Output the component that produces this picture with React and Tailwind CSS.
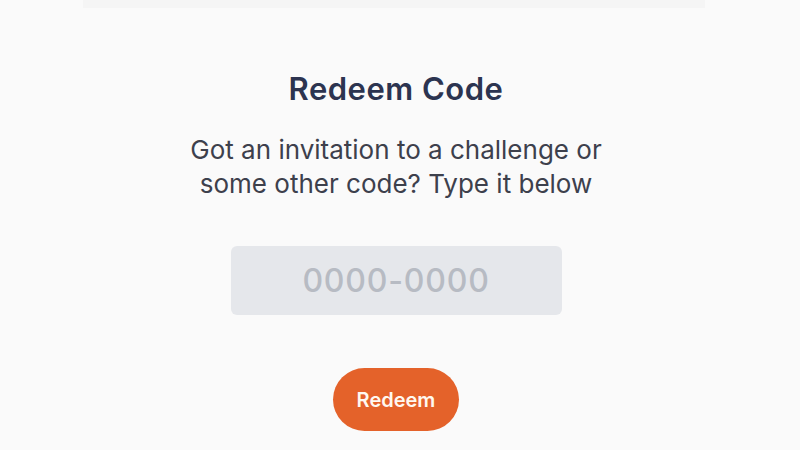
import React, { useState } from 'react';

const App = () => {
    const [code, setCode] = useState('');

    return (
        <div className="w-[800px] h-[450px] bg-[#fafafa] overflow-hidden flex flex-col items-center" style={{ fontFamily: 'Inter, "Noto Sans", sans-serif' }}>
            <div className="w-[622px] h-[8px] bg-[#f5f5f5] shrink-0 mr-[12px]" />

            <div className="flex flex-col items-center pr-[8px]">
                <h1 className="mt-[62px] text-[31px] leading-[38px] font-semibold text-[#2c3450] tracking-[0.5px]">
                    Redeem Code
                </h1>

                <p className="mt-[25px] text-[26px] leading-[34px] text-[#3d404c] text-center">
                    Got an invitation to a challenge or
                    <br />
                    some other code? Type it below
                </p>

                <input
                    type="text"
                    value={code}
                    onChange={(e) => setCode(e.target.value)}
                    placeholder="0000-0000"
                    className="mt-[45px] w-[331px] h-[69px] rounded-[6px] bg-[#e5e7eb] text-center text-[32px] font-medium text-[#3d404c] placeholder:text-[#b7bbc3] outline-none tracking-[0.8px]"
                />

                <button className="mt-[53px] w-[126px] h-[63px] rounded-full bg-[#e4622a] text-[#fff8f0] text-[20px] font-semibold">
                    Redeem
                </button>
            </div>
        </div>
    );
};

export default App;
